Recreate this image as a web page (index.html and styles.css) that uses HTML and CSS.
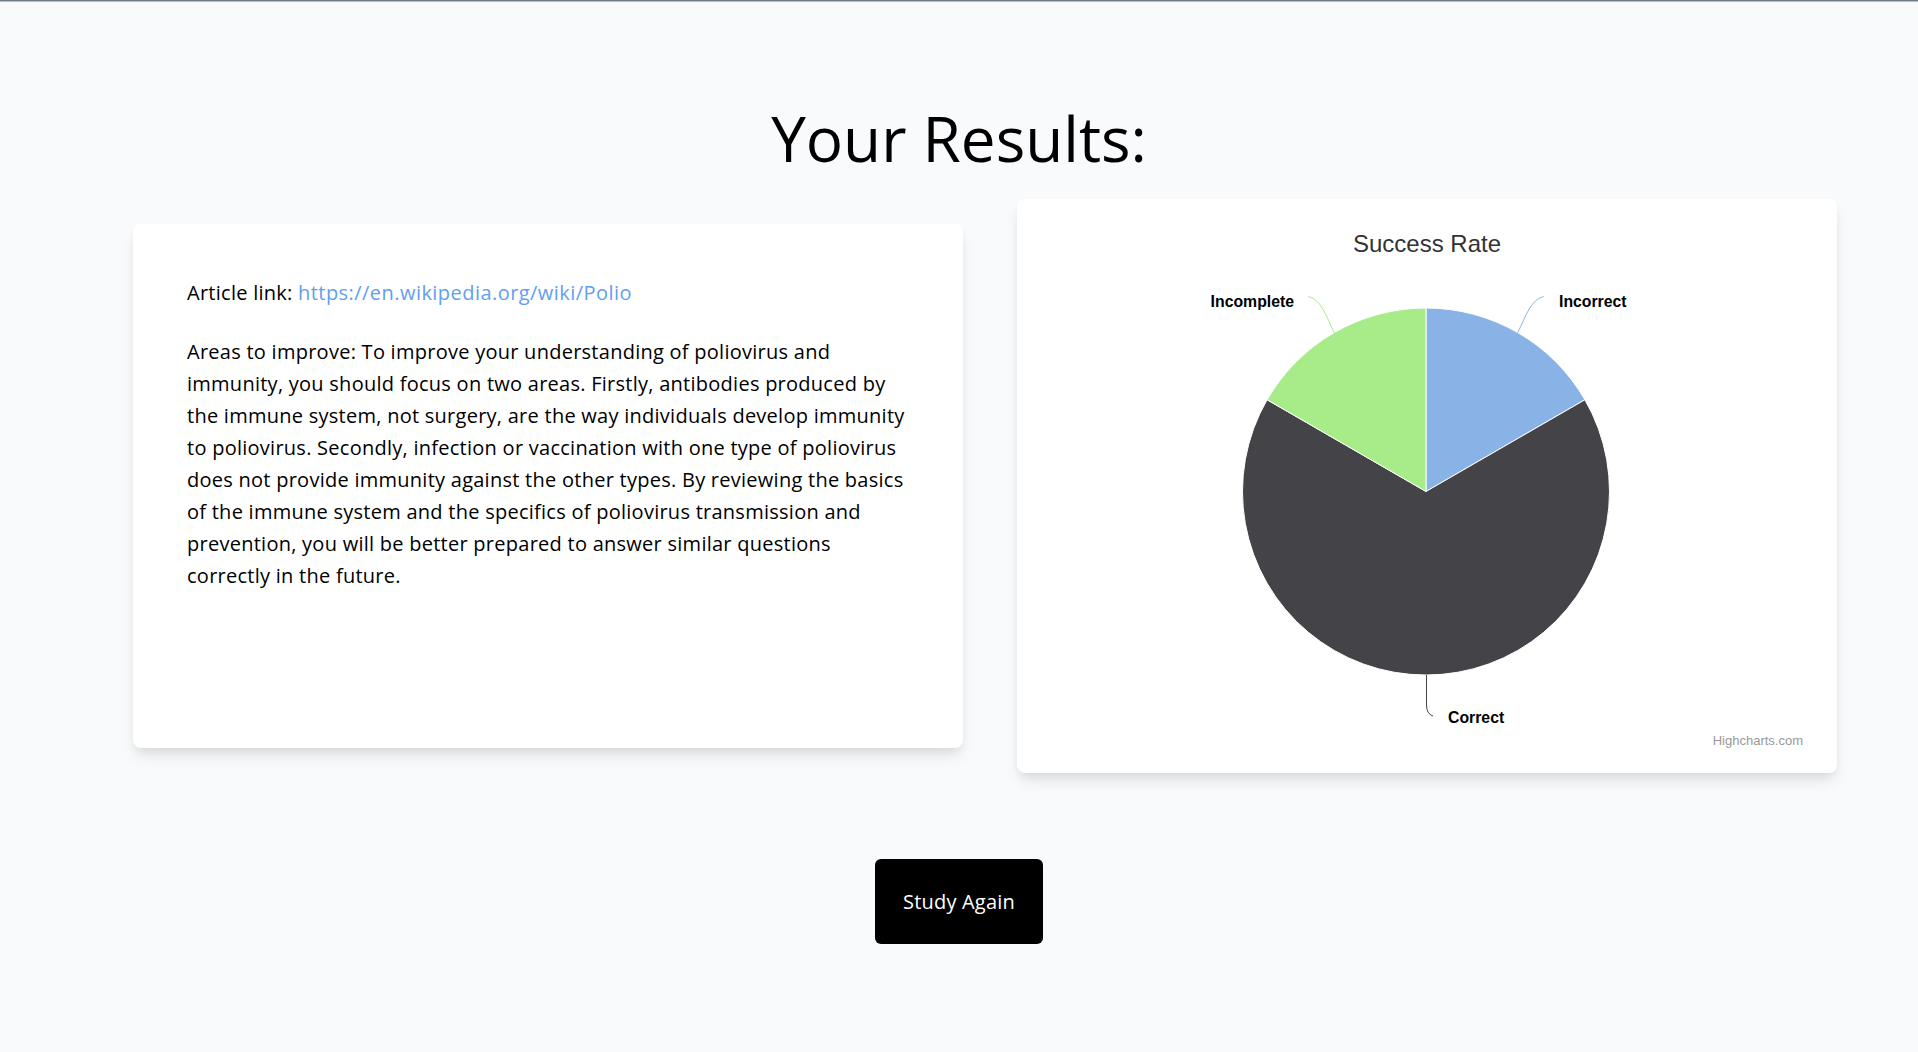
FILE: index.html
```html
<!DOCTYPE html>
<html lang="en">
<head>
<meta charset="utf-8">
<title>Your Results</title>
<link rel="stylesheet" href="styles.css">
</head>
<body>
<div class="topline"></div>
<main class="page">
  <h1 class="page-title">Your Results:</h1>
  <section class="results">
    <div class="card text-card">
      <p class="para">Article link: <a class="link" href="#">https://en.wikipedia.org/wiki/Polio</a></p>
      <p class="para">Areas to improve: To improve your understanding of poliovirus and immunity, you should focus on two areas. Firstly, antibodies produced by the immune system, not surgery, are the way individuals develop immunity to poliovirus. Secondly, infection or vaccination with one type of poliovirus does not provide immunity against the other types. By reviewing the basics of the immune system and the specifics of poliovirus transmission and prevention, you will be better prepared to answer similar questions correctly in the future.</p>
    </div>
    <div class="card chart-card">
      <svg class="chart" width="820" height="574" viewBox="0 0 820 574" xmlns="http://www.w3.org/2000/svg">
        <text class="chart-title" x="410" y="53" text-anchor="middle">Success Rate</text>
        <g stroke="#ffffff" stroke-width="1" stroke-linejoin="round">
          <path fill="#89b3e6" d="M409,292.5 L409,109 A183.5,183.5 0 0 1 567.9,200.75 Z"/>
          <path fill="#434348" d="M409,292.5 L567.9,200.75 A183.5,183.5 0 1 1 250.1,200.75 Z"/>
          <path fill="#a8eb89" d="M409,292.5 L250.1,200.75 A183.5,183.5 0 0 1 409,109 Z"/>
        </g>
        <g fill="none" stroke-width="1">
          <path stroke="#89b3e6" d="M500.75,133.6 C509,117 514,100 526.7,97.7"/>
          <path stroke="#a8eb89" d="M317.25,133.6 C309,117 304,100 291.3,97.7"/>
          <path stroke="#434348" d="M409.5,476 L409.5,506 Q409.5,515 416,517"/>
        </g>
        <g class="label">
          <text x="277" y="107.7" text-anchor="end">Incomplete</text>
          <text x="542" y="107.7">Incorrect</text>
          <text x="431" y="524">Correct</text>
        </g>
        <text class="credits" x="786" y="546" text-anchor="end">Highcharts.com</text>
      </svg>
    </div>
  </section>
  <button class="study-btn" type="button">Study Again</button>
</main>
</body>
</html>
```

FILE: styles.css
```css
html, body {
  margin: 0;
  padding: 0;
}

body {
  background: #f9fafb;
  font-family: "Open Sans", "Noto Sans", sans-serif;
  color: #000;
  min-height: 1052px;
}

.topline {
  height: 1px;
  background: #6e7b82;
  border-bottom: 1px solid #b7c0c4;
}

.page {
  display: flex;
  flex-direction: column;
  align-items: center;
}

.page-title {
  margin: 99px 0 0;
  font-size: 62px;
  line-height: 75px;
  font-weight: 400;
  color: #000;
}

.results {
  align-self: stretch;
  display: flex;
  align-items: center;
  gap: 54px;
  padding: 0 81px 0 133px;
  margin-top: 23px;
}

.card {
  background: #fff;
  border-radius: 8px;
  box-shadow: 0 10px 15px -3px rgba(0, 0, 0, 0.1), 0 4px 8px -2px rgba(0, 0, 0, 0.06);
  box-sizing: border-box;
}

.text-card {
  flex: 0 0 830px;
  height: 524px;
  padding: 53px 54px;
}

.para {
  margin: 0 0 27px;
  font-size: 20px;
  line-height: 32px;
  letter-spacing: 0.26px;
}

.link {
  color: #629ef2;
  text-decoration: none;
  letter-spacing: 0.45px;
}

.chart-card {
  flex: 0 0 820px;
  height: 574px;
  overflow: hidden;
}

.chart {
  display: block;
}

.chart-title {
  font-family: "Liberation Sans", Arial, sans-serif;
  font-size: 24px;
  fill: #333333;
}

.label text {
  font-family: "Liberation Sans", Arial, sans-serif;
  font-size: 15.8px;
  font-weight: 700;
  fill: #000;
}

.credits {
  font-family: "Liberation Sans", Arial, sans-serif;
  font-size: 13px;
  fill: #999999;
}

.study-btn {
  margin-top: 86px;
  width: 168px;
  height: 85px;
  padding: 0;
  border: none;
  border-radius: 6px;
  background: #000;
  color: #fff;
  font-family: "Open Sans", sans-serif;
  font-size: 20px;
  line-height: 32px;
  letter-spacing: 0.2px;
  cursor: pointer;
}
```
